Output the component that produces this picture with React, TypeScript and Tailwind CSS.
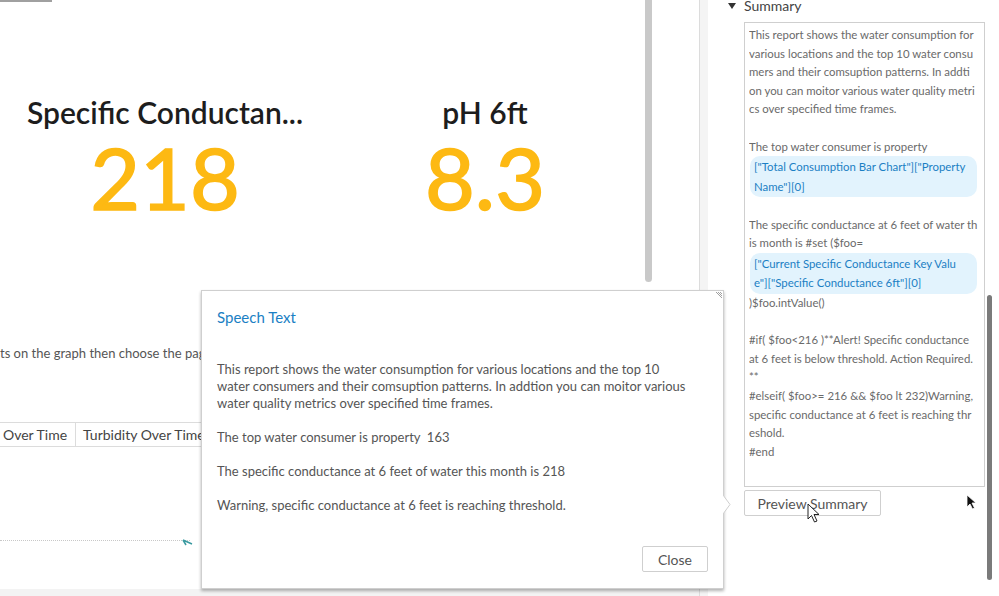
import React from "react";

const summaryLines1 = [
  "This report shows the water consumption for",
  "various locations and the top 10 water consu",
  "mers and their comsuption patterns. In addti",
  "on you can moitor various water quality metri",
  "cs over specified time frames.",
];

function Line({ children }: { children?: React.ReactNode }) {
  return <div className="h-[18.6px] leading-[18.6px] whitespace-nowrap overflow-hidden">{children}</div>;
}

function Chip({ lines }: { lines: string[] }) {
  return (
    <div className="ml-[1px] w-[227px] rounded-[10px] bg-[#e2f3fd] text-[#1b7fc4] pl-[4px] py-[1px]">
      {lines.map((l, i) => (
        <div key={i} className="h-[19.5px] leading-[19.5px] whitespace-nowrap overflow-hidden">
          {l}
        </div>
      ))}
    </div>
  );
}

export default function App() {
  return (
    <div className="relative w-[999px] h-[596px] overflow-hidden bg-white flex font-[Lato,sans-serif]">
      {/* Left panel */}
      <div className="w-[700px] h-full flex flex-col border-r border-[#dcdcdc] shrink-0">
        <div className="relative h-[589px] bg-white flex flex-col">
          <div className="flex items-start h-[2px]">
            <div className="w-[52px] h-[2px] bg-[#a0a0a0]" />
          </div>
          {/* KPIs */}
          <div className="grid grid-cols-2 w-[640px] ml-[5px] mt-[92px]">
            <div className="flex flex-col items-center">
              <div className="text-[30px] leading-[36px] font-semibold text-[#1d1d1d] whitespace-nowrap">Specific Conductan...</div>
              <div className="text-[86px] leading-[86px] text-[#fdb913] mt-[4px] [-webkit-text-stroke:1.6px_#fdb913]">218</div>
            </div>
            <div className="flex flex-col items-center">
              <div className="text-[30px] leading-[36px] font-semibold text-[#1d1d1d] whitespace-nowrap">pH 6ft</div>
              <div className="text-[86px] leading-[86px] text-[#fdb913] mt-[4px] [-webkit-text-stroke:1.6px_#fdb913]">8.3</div>
            </div>
          </div>
          <div className="mt-[124px] text-[13px] leading-[18px] text-[#555] whitespace-nowrap">
            ts on the graph then choose the page to drill to a detailed view.
          </div>
          <div className="mt-[60px] flex border-t border-b border-[#dcdcdc] h-[25px] text-[14px] text-[#444]">
            <div className="pl-[3px] pr-[8px] border-r border-[#dcdcdc] leading-[23px] whitespace-nowrap">Over Time</div>
            <div className="pl-[7px] pr-[3px] border-r border-[#dcdcdc] leading-[23px] whitespace-nowrap">Turbidity Over Time</div>
          </div>
          <div className="mt-[87px] flex items-center">
            <div className="w-[190px] border-t border-dotted border-[#c8c8c8]" />
            <svg width="12" height="8" viewBox="0 0 12 8" className="-ml-[8px] mt-[4px]">
              <path d="M1 2 L4 7 M1 2 L10 6" stroke="#3a9aa0" strokeWidth="1.5" fill="none" />
            </svg>
          </div>
          {/* left scrollbar */}
          <div className="absolute left-[645px] top-0 w-[7px] h-[282px] bg-[#c9c9c9] rounded-b-[4px]" />
        </div>
        <div className="flex-1 bg-[#f3f3f3]" />
      </div>
      {/* separator band */}
      <div className="w-[8px] h-full bg-[#f4f4f4] shrink-0" />
      {/* Right panel */}
      <div className="relative flex-1 h-full bg-white">
        <div className="flex items-center h-[14px] pl-[20px] -mt-[1px] text-[14px] text-[#444]">
          <svg width="8" height="6" viewBox="0 0 8 6" className="mr-[8px]">
            <path d="M0 0 L8 0 L4 6 Z" fill="#333" />
          </svg>
          <span className="leading-[14px]">Summary</span>
        </div>
        <div className="ml-[36px] mt-[9px] w-[241px] h-[465px] border border-[#cfcfcf] pt-[3px] pl-[4px] text-[11.4px] text-[#6a6a6a]">
          {summaryLines1.map((l, i) => (
            <Line key={i}>{l}</Line>
          ))}
          <Line />
          <Line>The top water consumer is property</Line>
          <Chip lines={['["Total Consumption Bar Chart"]["Property', 'Name"][0]']} />
          <Line />
          <Line>The specific conductance at 6 feet of water th</Line>
          <Line>is month is #set ($foo=</Line>
          <Chip lines={['["Current Specific Conductance Key Valu', 'e"]["Specific Conductance 6ft"][0]']} />
          <Line>)$foo.intValue()</Line>
          <Line />
          <Line>#if( $foo&lt;216 )**Alert! Specific conductance</Line>
          <Line>at 6 feet is below threshold. Action Required.</Line>
          <Line>**</Line>
          <Line>#elseif( $foo&gt;= 216 &amp;&amp; $foo lt 232)Warning,</Line>
          <Line>specific conductance at 6 feet is reaching thr</Line>
          <Line>eshold.</Line>
          <Line>#end</Line>
        </div>
        <div className="ml-[36px] mt-[3px] w-[137px] h-[26px] border border-[#cfcfcf] rounded-[2px] flex items-center justify-center text-[14px] text-[#555]">
          Preview Summary
        </div>
        {/* right scrollbar */}
        <div className="absolute left-[279px] top-[295px] w-[5px] h-[285px] bg-[#7a7a7a] rounded-[3px]" />
        {/* black cursor */}
        <svg className="absolute left-[258px] top-[494px]" width="12" height="17" viewBox="0 0 12 17">
          <path d="M1 1 L1 13 L4 10 L6.5 15 L8.5 14 L6 9 L10 9 Z" fill="#111" stroke="#fff" strokeWidth="0.8" />
        </svg>
      </div>

      {/* Speech text dialog */}
      <div className="absolute left-[201px] top-[290px] w-[523px] h-[299px] bg-white border border-[#cfcfcf] shadow-[0_2px_3px_rgba(0,0,0,0.3)] flex flex-col">
        <div className="pl-[15px] pt-[16px] text-[15px] leading-[20px] text-[#1b7fc4]">Speech Text</div>
        <div className="pl-[15px] pr-[10px] mt-[34px] text-[13px] leading-[17px] text-[#555]">
          <p>
            This report shows the water consumption for various locations and the top 10
            <br />
            water consumers and their comsuption patterns. In addtion you can moitor various
            <br />
            water quality metrics over specified time frames.
          </p>
          <p className="mt-[17px]">The top water consumer is property&nbsp; 163</p>
          <p className="mt-[17px]">The specific conductance at 6 feet of water this month is 218</p>
          <p className="mt-[17px]">Warning, specific conductance at 6 feet is reaching threshold.</p>
        </div>
        <div className="mt-auto mb-[16px] mr-[15px] self-end w-[66px] h-[26px] border border-[#cfcfcf] rounded-[2px] flex items-center justify-center text-[14px] text-[#555]">
          Close
        </div>
        {/* resize grip */}
        <svg className="absolute right-[1px] top-[1px]" width="8" height="8" viewBox="0 0 8 8">
          <path d="M2 0 L8 6 M4 0 L8 4 M6 0 L8 2" stroke="#888" strokeWidth="0.8" />
        </svg>
        {/* callout arrow */}
        <svg className="absolute -right-[8px] top-[204px]" width="8" height="19" viewBox="0 0 8 19">
          <path d="M0 0 L7 9.5 L0 19 Z" fill="#fff" />
          <path d="M0 0 L7 9.5 L0 19" fill="none" stroke="#cfcfcf" strokeWidth="1" />
        </svg>
      </div>

      {/* white pointer cursor */}
      <svg className="absolute left-[807px] top-[503px]" width="14" height="21" viewBox="0 0 14 21">
        <path d="M1 1 L1 16 L4.5 12.5 L7.5 19 L10 18 L7 11.5 L12 11.5 Z" fill="#fff" stroke="#222" strokeWidth="1" />
      </svg>
    </div>
  );
}
